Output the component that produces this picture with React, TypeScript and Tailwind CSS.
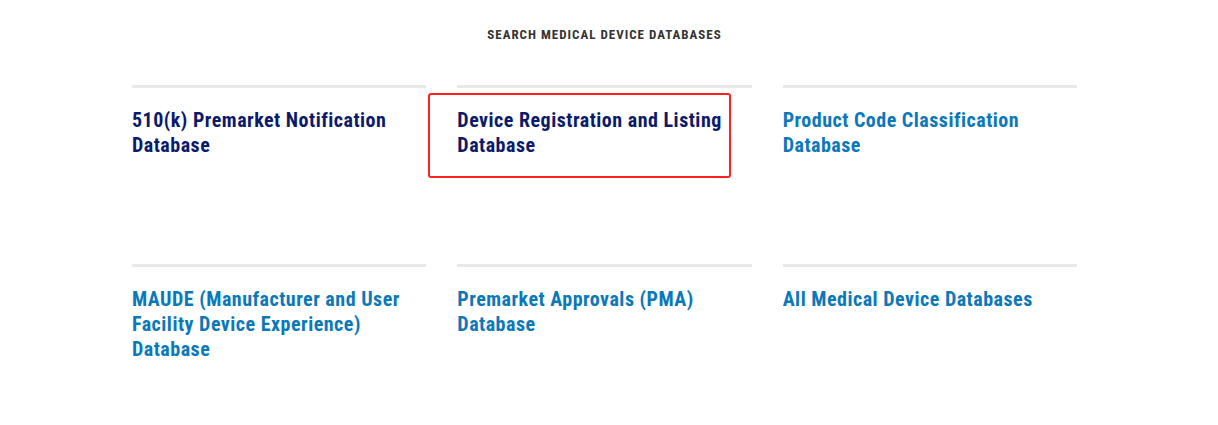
import React from "react";

const items = [
  { label: "510(k) Premarket Notification Database", visited: true },
  { label: "Device Registration and Listing Database", visited: true, marked: true },
  { label: "Product Code Classification Database" },
  { label: "MAUDE (Manufacturer and User Facility Device Experience) Database" },
  { label: "Premarket Approvals (PMA) Database" },
  { label: "All Medical Device Databases" },
];

export default function App() {
  return (
    <div
      className="w-[1218px] h-[425px] bg-white overflow-hidden"
      style={{ fontFamily: '"Roboto Condensed", "Liberation Sans Narrow", Roboto, sans-serif' }}
    >
      <div className="ml-[132px] w-[945px] pt-[27px]">
        <h2 className="text-center text-[13px] leading-[15px] font-bold uppercase tracking-[1px] text-[#333333]">
          Search Medical Device Databases
        </h2>
        <div className="grid grid-cols-3 gap-x-[31px] mt-[43px]">
          {items.map((item) => (
            <div key={item.label} className="relative h-[179px] border-t-[3px] border-[#e8e8e8]">
              <a
                href="#"
                className={
                  "block mt-[20px] text-[20px] leading-[25px] font-bold tracking-[0.5px] " +
                  (item.visited ? "text-[#0c1a6c]" : "text-[#0b78b9]")
                }
              >
                {item.label}
              </a>
              {item.marked && (
                <div className="absolute left-[-29px] top-[5px] w-[303px] h-[85px] border-2 border-[#ff2020] rounded-[3px]" />
              )}
            </div>
          ))}
        </div>
      </div>
    </div>
  );
}
